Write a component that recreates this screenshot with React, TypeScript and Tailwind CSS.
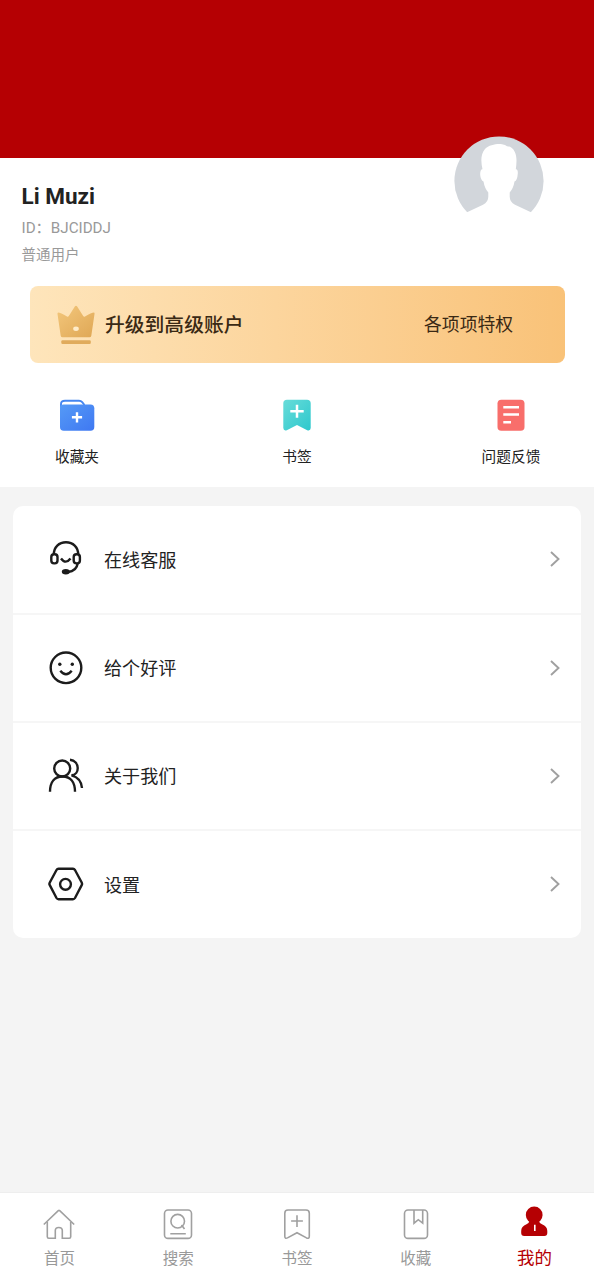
import React from 'react';

const AvatarImage = () => (
  <svg viewBox="0 0 90 90" className="w-[90px] h-[90px]" aria-hidden="true">
    <circle cx="45" cy="45" r="44.6" fill="#d2d6db" />
    <path
      d="M12.500 76.500L29 68.800Q34.500 66 34.300 60V56.500Q30.500 52 29.500 45.500C26.500 44.500 25.200 37 27 34Q27.600 33 28.500 33.300C26.800 26 26.500 18 31 13C35 8.600 44 7.500 48 8.300Q51.500 8.800 53 10.300Q58 10.300 60.800 16C63.300 21 62.500 28 61.800 33.300Q64 33 63.800 37.500Q63.300 44.500 60.500 45.500Q59.500 52 55.700 56.500V60Q55.500 66 61 68.800L77.500 76.500V90H12.500Z"
      fill="#fff"
    />
  </svg>
);

const CrownIcon = () => (
  <svg viewBox="0 0 40 40" className="w-10 h-10" aria-hidden="true">
    <defs>
      <linearGradient id="crown" x1="0" y1="0" x2="1" y2="1">
        <stop offset="0" stopColor="#f3c77c" />
        <stop offset="1" stopColor="#dfa755" />
      </linearGradient>
    </defs>
    <path
      d="M2 7.500Q4.500 7.500 11 11.500Q12 12.200 12.800 11L19 1.300Q20 0 21 1.300L27.200 11Q28 12.200 29 11.500Q35.500 7.500 38 7.500Q38.800 7.700 38.500 9L35.300 30.800Q35 32.300 33.500 32.300H6.500Q5 32.300 4.700 30.800L1.500 9Q1.300 8 2 7.500Z"
      fill="url(#crown)"
    />
    <ellipse cx="20" cy="23.800" rx="2.800" ry="2.200" fill="#ffecc9" />
    <rect x="5.300" y="35.200" width="29.500" height="3.800" rx="1.200" fill="#e0ab5c" />
  </svg>
);

const FolderIcon = () => (
  <svg viewBox="0 0 36 32" className="w-9 h-8" aria-hidden="true">
    <defs>
      <linearGradient id="folder" x1="0" y1="0" x2="1" y2="1">
        <stop offset="0" stopColor="#559af6" />
        <stop offset="1" stopColor="#3f78f2" />
      </linearGradient>
    </defs>
    <path d="M2 8V5Q2 1.800 6 1.800H20Q22 1.800 23.200 3.200L25.500 6" fill="none" stroke="#4586f0" strokeWidth="1.900" />
    <path d="M1 8.500Q1 5.500 4.500 5.500H31.500Q35.300 5.500 35.300 9.300V28Q35.300 31.800 31.500 31.800H4.800Q1 31.800 1 28Z" fill="url(#folder)" />
    <path d="M18 13.200V23.400M12.900 18.300H23.100" stroke="#fff" strokeWidth="2.400" />
  </svg>
);

const BookmarkIcon = () => (
  <svg viewBox="0 0 28 32" className="w-7 h-8" aria-hidden="true">
    <defs>
      <linearGradient id="bookmark" x1="0" y1="0" x2="1" y2="1">
        <stop offset="0" stopColor="#68dcd9" />
        <stop offset="1" stopColor="#2dc8cd" />
      </linearGradient>
    </defs>
    <path d="M0.300 4.300Q0.300 0.800 4 0.800H24Q27.700 0.800 27.700 4.300V29Q27.500 32.200 24.200 31.200L14 26L3.800 31.200Q0.500 32.200 0.300 29Z" fill="url(#bookmark)" />
    <path d="M14 5.800V18.700M7.300 12.200H20.700" stroke="#fff" strokeWidth="2.500" />
  </svg>
);

const FeedbackIcon = () => (
  <svg viewBox="0 0 28 32" className="w-7 h-8" aria-hidden="true">
    <rect x="0.500" y="0.800" width="27" height="31" rx="3.800" fill="#f86e6b" />
    <path d="M6.300 8.200H22M6.300 15.500H22M6.300 23.300H14" stroke="#fff" strokeWidth="2.500" />
  </svg>
);

const line = {
  fill: 'none',
  stroke: '#1c1c1c',
  strokeWidth: 2.4,
  'aria-hidden': true,
} as const;

const HeadsetIcon = () => (
  <svg viewBox="0 0 36 36" className="w-9 h-9" {...line}>
    <path d="M5.800 13.500C5.800 6 11 1.200 18 1.200S30.200 6 30.200 13.500" />
    <rect x="3.300" y="13.200" width="6.200" height="9.200" rx="2.800" />
    <rect x="25.700" y="13.200" width="6.200" height="9.200" rx="2.800" />
    <path d="M13 17.500Q17.700 23.800 22.500 17.500M29.800 22Q28.500 30.300 20 31" />
    <ellipse cx="17.800" cy="30.700" rx="4" ry="2.700" fill="#1c1c1c" stroke="none" />
  </svg>
);

const SmileIcon = () => (
  <svg viewBox="0 0 36 36" className="w-9 h-9" {...line}>
    <circle cx="18" cy="17.800" r="15.300" />
    <path d="M12.300 20.800Q18 27.800 23.700 20.800" />
    <circle cx="11.800" cy="14.200" r="1.700" fill="#1c1c1c" stroke="none" />
    <circle cx="24.300" cy="14.200" r="1.700" fill="#1c1c1c" stroke="none" />
  </svg>
);

const PeopleIcon = () => (
  <svg viewBox="0 0 36 36" className="w-9 h-9" {...line}>
    <circle cx="14.200" cy="10.500" r="8" />
    <path d="M2 33.800C2 24 6.500 18.500 14.500 18.500S27 24 27 33.800" />
    <path d="M22 1.800C32 3 32 16.800 23.500 17.300C30 19 33.500 24 34 30" />
  </svg>
);

const SettingsIcon = () => (
  <svg viewBox="0 0 36 36" className="w-9 h-9" {...line}>
    <path d="M10.500 2.800H25Q26.200 2.800 27 4L33.700 16.500Q34.400 18 33.700 19.200L27 32Q26.300 33.200 25 33.200H10.500Q9.200 33.200 8.500 32L1.800 19.200Q1 18 1.800 16.500L8.500 4Q9.200 2.800 10.500 2.800Z" />
    <circle cx="17.500" cy="18.300" r="5.400" />
  </svg>
);

const ChevronIcon = () => (
  <svg viewBox="0 0 10 18" className="w-2.5 h-[18px]" fill="none" stroke="#a0a0a0" strokeWidth="1.900" aria-hidden="true">
    <path d="M1 2L8.500 9L1 16" />
  </svg>
);

const tabLine = {
  fill: 'none',
  stroke: '#a0a0a0',
  strokeWidth: 1.6,
  'aria-hidden': true,
} as const;

const HomeTabIcon = () => (
  <svg viewBox="0 0 32 32" className="w-8 h-8" {...tabLine}>
    <path d="M0.800 16.500L15.300 2.700Q16 2 16.700 2.700L31.200 16.500" />
    <path d="M4.300 14V28.700Q4.300 30.200 5.800 30.200H12.300V22.500Q12.300 19.500 15.800 19.500T19.300 22.500V30.200H26.200Q27.700 30.200 27.700 28.700V14" />
  </svg>
);

const SearchTabIcon = () => (
  <svg viewBox="0 0 32 32" className="w-8 h-8" {...tabLine}>
    <rect x="2.500" y="2" width="27" height="28.400" rx="3.500" />
    <circle cx="15.700" cy="13.200" r="6.800" />
    <path d="M19.500 17L22.500 21M8.300 25.700H23.800" />
  </svg>
);

const BookmarkTabIcon = () => (
  <svg viewBox="0 0 32 32" className="w-8 h-8" {...tabLine}>
    <path d="M3.800 5.200Q3.800 2 7 2H25Q28.300 2 28.300 5.200V28.200Q28.300 31.200 25.500 29.900L16 24.700L6.500 29.900Q3.800 31.200 3.800 28.200Z" />
    <path d="M16 7.200V19M10.100 13H21.900" />
  </svg>
);

const CollectTabIcon = () => (
  <svg viewBox="0 0 32 32" className="w-8 h-8" {...tabLine}>
    <rect x="4.500" y="2" width="23" height="28.400" rx="3.500" />
    <path d="M14 2V15.200L18.300 11.700L22.700 15.200V2" />
  </svg>
);

const MineTabIcon = () => (
  <svg viewBox="0 0 32 32" className="w-8 h-8" aria-hidden="true">
    <circle cx="15.200" cy="10" r="8.400" fill="#b50003" />
    <path
      d="M10.700 15.500H19.700Q20.200 18 23 19.200C26.500 20.700 28.300 22.700 28.300 26V28Q28.300 31 25.300 31H5.200Q2.200 31 2.200 28V26C2.200 22.700 4 20.700 7.500 19.200Q10.200 18 10.700 15.500Z"
      fill="#b50003"
    />
    <path d="M15.800 19.700V26" stroke="#fff" strokeWidth="1.600" />
  </svg>
);

const SHORTCUTS = [
  { label: '收藏夹', Icon: FolderIcon },
  { label: '书签', Icon: BookmarkIcon },
  { label: '问题反馈', Icon: FeedbackIcon },
];

const MENU_ITEMS = [
  { label: '在线客服', Icon: HeadsetIcon },
  { label: '给个好评', Icon: SmileIcon },
  { label: '关于我们', Icon: PeopleIcon },
  { label: '设置', Icon: SettingsIcon },
];

const TABS = [
  { label: '首页', Icon: HomeTabIcon },
  { label: '搜索', Icon: SearchTabIcon },
  { label: '书签', Icon: BookmarkTabIcon },
  { label: '收藏', Icon: CollectTabIcon },
];

const App: React.FC = () => {
  return (
    <div className="h-[1280px] flex flex-col bg-[#f4f4f4] text-[#222] font-[Roboto,'Noto_Sans_CJK_SC',sans-serif]">
      <header className="h-[158px] shrink-0 bg-[#b50003]" />

      <section className="relative h-[329px] shrink-0 bg-white">
        <div className="absolute right-[50px] -top-[22px]">
          <AvatarImage />
        </div>

        {/* Profile */}
        <div className="h-32 pl-[21.500px] pt-6">
          <h1 className="text-[22.500px] leading-7 font-bold">Li Muzi</h1>
          <p className="mt-[5px] text-[15.200px] leading-[27px] text-[#999]">ID：BJCIDDJ</p>
          <p className="text-[14.500px] leading-[27px] text-[#999]">普通用户</p>
        </div>

        {/* Upgrade banner */}
        <button className="mx-[29.500px] w-[535px] h-[77px] flex items-center justify-between rounded-lg bg-linear-to-r from-[#fee5bb] to-[#f9c278] pl-[26px] pr-[51.500px] text-[#3a2914]">
          <span className="flex items-center gap-[9.500px]">
            <CrownIcon />
            <span className="pt-0.5 text-[19.800px] font-medium">升级到高级账户</span>
          </span>
          <span className="pt-0.5 text-[17.800px]">各项项特权</span>
        </button>

        {/* Shortcuts */}
        <div className="mt-9 grid grid-cols-[154px_286px_142px]">
          {SHORTCUTS.map(({ label, Icon }) => (
            <button key={label} className="flex flex-col items-center gap-[13.500px]">
              <Icon />
              <span className="text-[14.700px] leading-6">{label}</span>
            </button>
          ))}
        </div>
      </section>

      {/* Menu */}
      <main className="flex-1">
        <ul className="mt-[19px] mx-[13px] h-[432px] grid grid-rows-[108.500px_108.300px_108.200px_1fr] rounded-[10px] bg-white divide-y-2 divide-[#f6f6f6]">
          {MENU_ITEMS.map(({ label, Icon }) => (
            <li key={label} className="flex items-center pl-[35px] pr-[21px]">
              <Icon />
              <span className="ml-5 flex-1 pt-0.5 text-[18.100px]">{label}</span>
              <ChevronIcon />
            </li>
          ))}
        </ul>
      </main>

      <nav className="h-[88px] shrink-0 grid grid-cols-5 border-t border-[#eee] bg-white">
        {TABS.map(({ label, Icon }) => (
          <button key={label} className="flex flex-col items-center pt-[15px] gap-[7px] text-[#999]">
            <Icon />
            <span className="text-[15.500px] leading-6">{label}</span>
          </button>
        ))}
        <button className="flex flex-col items-center pt-3 gap-[9px] text-[#b50003]">
          <MineTabIcon />
          <span className="text-[17.500px] leading-6">我的</span>
        </button>
      </nav>
    </div>
  );
};

export default App;
